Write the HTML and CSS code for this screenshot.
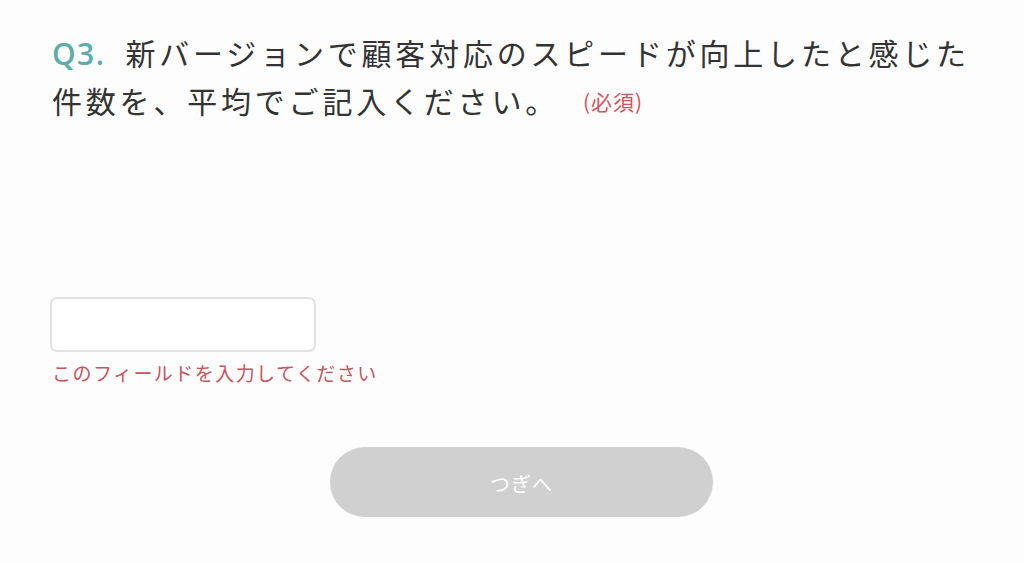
FILE: index.html
```html
<!DOCTYPE html>
<html>
<head>
	<meta charset="utf-8">
	<title>アンケート Q3</title>
	<link rel="stylesheet" href="styles.css">
</head>
<body>
	<div class="contain">
		<h2 class="question">
			<span class="qnum">Q3.</span><span class="qtext">新バージョンで顧客対応のスピードが向上したと感じた件数を、平均でご記入ください。</span><span class="must">(必須)</span>
		</h2>
		<div class="field">
			<input type="text" class="answer">
			<p class="error">このフィールドを入力してください</p>
		</div>
		<div class="btns">
			<button class="next" disabled>つぎへ</button>
		</div>
	</div>
</body>
</html>
```

FILE: styles.css
```css
*{
	margin: 0;
	padding: 0;
	box-sizing: border-box;
}
	body{
		background: #fdfdfd;
		color: #333;
		font-family: "Noto Sans CJK JP", sans-serif;
	}
	.contain{
		width: 1024px;
		padding: 29px 30px 0 52px;
	}
	.question{
		font-size: 30px;
		font-weight: normal;
		line-height: 46px;
		letter-spacing: 3.8px;
	}
	.qnum{
		font-family: "Open Sans", sans-serif;
		font-weight: 600;
		color: #5aadab;
		letter-spacing: 1.5px;
		margin-right: 20px;
	}
	.must{
		font-size: 21px;
		line-height: 30px;
		color: #d2525c;
		letter-spacing: 1px;
		margin-left: 24px;
		display: inline-block;
		vertical-align: top;
		margin-top: 9px;
	}
	.field{
		margin-top: 174px;
	}
	.answer{
		display: block;
		width: 266px;
		height: 55px;
		margin-left: -2px;
		border: 2px solid #e2e2e2;
		border-radius: 7px;
		background: #fff;
		outline: none;
	}
	.error{
		margin-top: 7px;
		font-size: 19px;
		line-height: 28px;
		letter-spacing: 1.45px;
		color: #c9525d;
	}
	.btns{
		display: flex;
		justify-content: center;
		margin-top: 60px;
		padding-right: 3px;
	}
	.next{
		width: 383px;
		height: 70px;
		border: none;
		border-radius: 35px;
		background: #d0d0d0;
		color: #fff;
		font-family: "Noto Sans CJK JP", sans-serif;
		font-size: 20px;
		letter-spacing: 1px;
		padding-top: 2px;
	}
```
